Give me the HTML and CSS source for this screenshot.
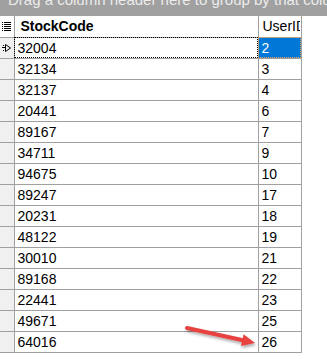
FILE: index.html
```html
<html>
<head>
<link rel="stylesheet" href="styles.css">
</head>
<body>
  <div class="groupbar"><span>Drag a column header here to group by that column</span></div>

  <div class="gridwrap">
    <table class="grid">
      <colgroup>
        <col class="c-sel">
        <col class="c-code">
        <col class="c-user">
      </colgroup>
      <thead>
        <tr>
          <th class="sel">
            <svg width="9" height="9" viewBox="0 0 9 9">
              <rect x="0" y="0" width="1" height="1" fill="#000"/>
              <rect x="2" y="0" width="7" height="1" fill="#000"/>
              <rect x="0" y="2" width="1" height="1" fill="#000"/>
              <rect x="2" y="2" width="7" height="1" fill="#000"/>
              <rect x="0" y="4" width="1" height="1" fill="#000"/>
              <rect x="2" y="4" width="7" height="1" fill="#000"/>
              <rect x="0" y="6" width="1" height="1" fill="#000"/>
              <rect x="2" y="6" width="7" height="1" fill="#000"/>
              <rect x="0" y="8" width="1" height="1" fill="#000"/>
              <rect x="2" y="8" width="7" height="1" fill="#000"/>
            </svg>
          </th>
          <th class="hd">StockCode</th>
          <th class="hd hd-user"><div class="clip">UserID</div></th>
        </tr>
      </thead>
      <tbody>
        <tr>
          <td class="sel">
            <svg width="10" height="10" viewBox="0 0 10 10">
              <path d="M3.5 1.5 L8.5 5 L3.5 8.5 Z" fill="none" stroke="#000" stroke-width="1"/>
              <rect x="0" y="4" width="3" height="1" fill="#000"/>
              <rect x="1" y="2" width="1" height="1" fill="#000"/>
              <rect x="1" y="7" width="1" height="1" fill="#000"/>
            </svg>
          </td>
          <td class="cur">32004</td>
          <td class="picked">2</td>
        </tr>
        <tr><td class="sel"></td><td>32134</td><td>3</td></tr>
        <tr><td class="sel"></td><td>32137</td><td>4</td></tr>
        <tr><td class="sel"></td><td>20441</td><td>6</td></tr>
        <tr><td class="sel"></td><td>89167</td><td>7</td></tr>
        <tr><td class="sel"></td><td>34711</td><td>9</td></tr>
        <tr><td class="sel"></td><td>94675</td><td>10</td></tr>
        <tr><td class="sel"></td><td>89247</td><td>17</td></tr>
        <tr><td class="sel"></td><td>20231</td><td>18</td></tr>
        <tr><td class="sel"></td><td>48122</td><td>19</td></tr>
        <tr><td class="sel"></td><td>30010</td><td>21</td></tr>
        <tr><td class="sel"></td><td>89168</td><td>22</td></tr>
        <tr><td class="sel"></td><td>22441</td><td>23</td></tr>
        <tr><td class="sel"></td><td>49671</td><td>25</td></tr>
        <tr><td class="sel"></td><td>64016</td><td>26</td></tr>
      </tbody>
    </table>

    <!-- red pointer drawn over the grid -->
    <svg class="pointer" width="80" height="30" viewBox="0 0 80 30">
      <defs>
        <filter id="shadow" x="-20%" y="-50%" width="140%" height="200%">
          <feDropShadow dx="1" dy="2" stdDeviation="1.5" flood-color="#000" flood-opacity="0.35"/>
        </filter>
      </defs>
      <g filter="url(#shadow)">
        <path d="M3 4 L59 16.3" stroke="#e8423f" stroke-width="4" stroke-linecap="round"/>
        <path d="M71 19 L59.6 10.3 L57 22.1 Z" fill="#e8423f"/>
      </g>
    </svg>
  </div>
</body>
</html>
```

FILE: styles.css
```css
body
{
  margin:0;
  padding:0;
  background-color:#ffffff;
  font-family:"Liberation Sans", Arial, sans-serif;
}

.groupbar
{
  height:16px;
  background-color:#a0a0a0;
  overflow:hidden;
  padding-left:8px;
}

.groupbar span
{
  display:block;
  margin-top:-9px;
  font-size:15px;
  line-height:18px;
  color:#ececec;
  white-space:nowrap;
}

.gridwrap
{
  position:relative;
}

.grid
{
  border-collapse:collapse;
  table-layout:fixed;
  width:301px;
  font-size:14px;
  color:#000;
}

.c-sel { width:14px; }
.c-code { width:244px; }
.c-user { width:43px; }

.grid th, .grid td
{
  height:21px;
  padding:0 0 0 3px;
  border:1px solid #a0a0a0;
  text-align:left;
  white-space:nowrap;
  overflow:hidden;
  line-height:20px;
}

.grid thead th
{
  border-top:none;
  font-weight:normal;
}

.grid th.hd
{
  font-weight:bold;
  padding-left:6px;
}

.grid th.hd-user
{
  font-weight:normal;
  padding-left:4px;
}

.clip
{
  width:37px;
  overflow:hidden;
}

.grid .sel
{
  border-left:none;
  background-color:#f0f0f0;
  padding:0 0 0 2px;
}

.grid thead .sel
{
  background-color:#ffffff;
}

.grid .sel svg
{
  display:block;
}

.grid td.cur
{
  outline:1px dotted #000;
  outline-offset:-1px;
}

.grid td.picked
{
  background-color:#0078d7;
  color:#ffffff;
  outline:1px dotted #e0a060;
  outline-offset:-1px;
}

.pointer
{
  position:absolute;
  left:184px;
  top:308px;
}
```
